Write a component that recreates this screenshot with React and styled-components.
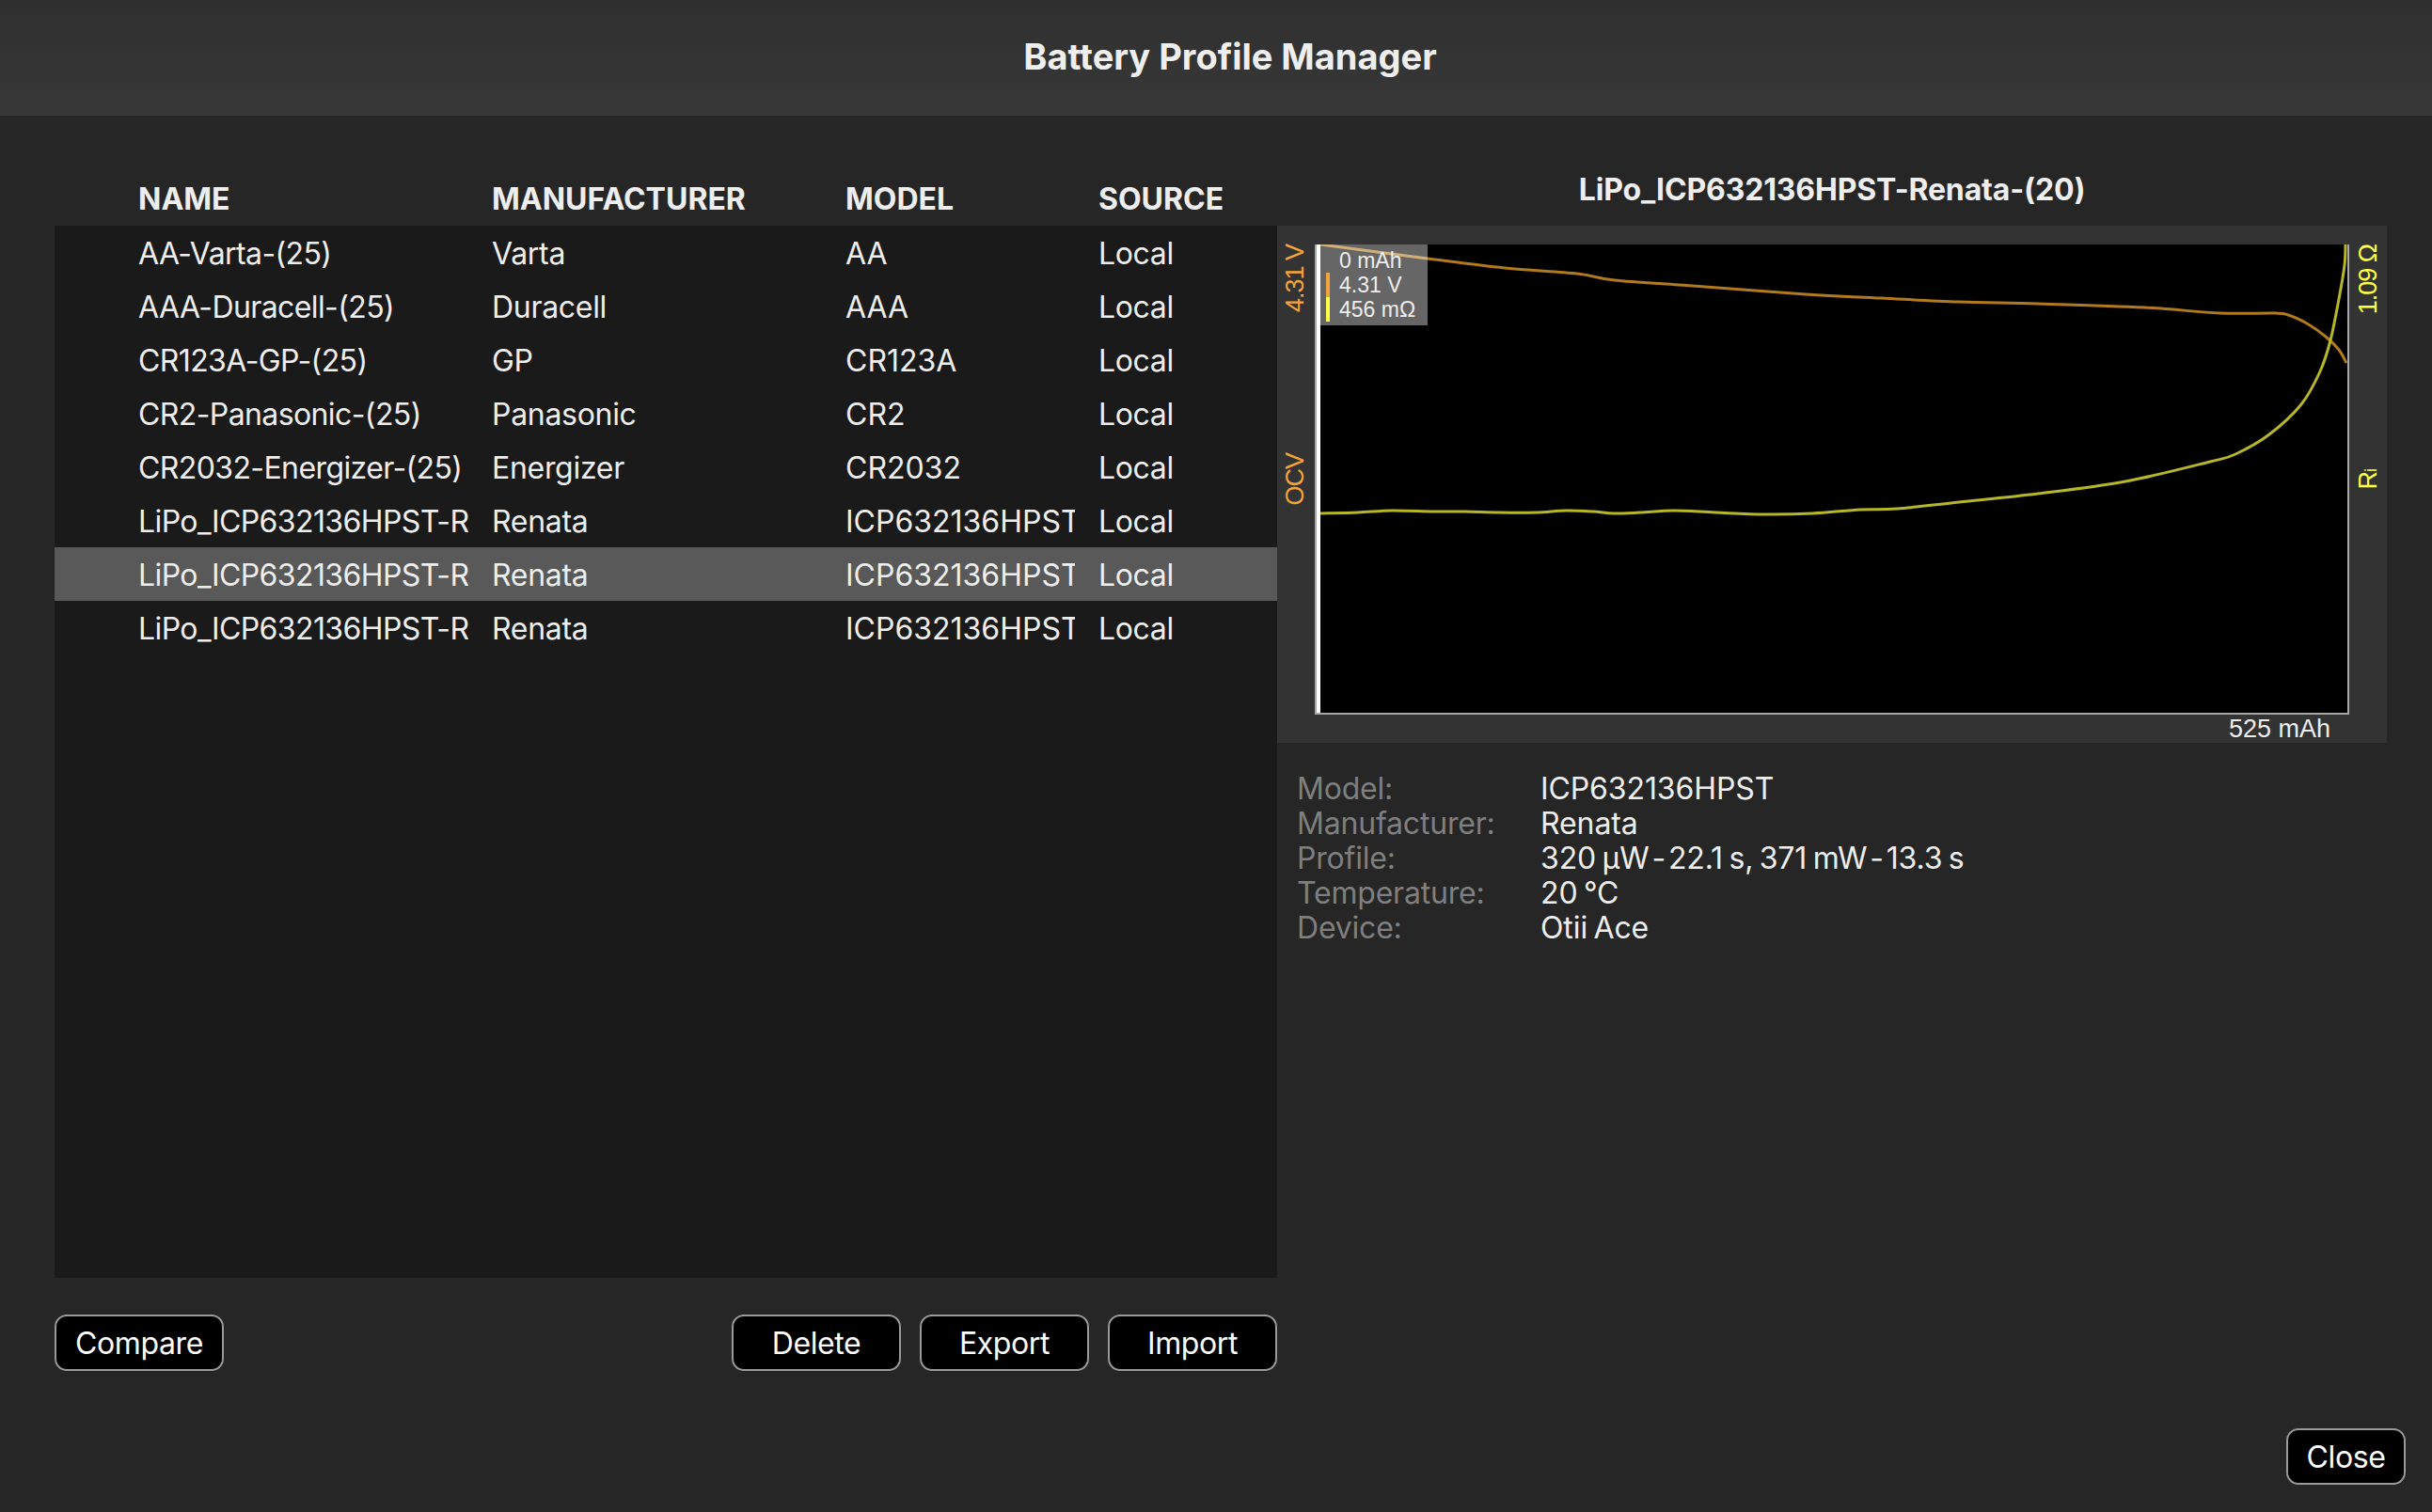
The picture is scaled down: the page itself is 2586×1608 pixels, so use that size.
import React from "react"
import styled, { createGlobalStyle } from "styled-components"

const PROFILES = [
    { name: "AA-Varta-(25)", manufacturer: "Varta", model: "AA" },
    { name: "AAA-Duracell-(25)", manufacturer: "Duracell", model: "AAA" },
    { name: "CR123A-GP-(25)", manufacturer: "GP", model: "CR123A" },
    { name: "CR2-Panasonic-(25)", manufacturer: "Panasonic", model: "CR2" },
    { name: "CR2032-Energizer-(25)", manufacturer: "Energizer", model: "CR2032" },
    { name: "LiPo_ICP632136HPST-Renata-(10)", manufacturer: "Renata", model: "ICP632136HPST" },
    { name: "LiPo_ICP632136HPST-Renata-(20)", manufacturer: "Renata", model: "ICP632136HPST", selected: true },
    { name: "LiPo_ICP632136HPST-Renata-(30)", manufacturer: "Renata", model: "ICP632136HPST" },
]

const DETAILS = [
    ["Model:", "ICP632136HPST"],
    ["Manufacturer:", "Renata"],
    ["Profile:", "320 µW\u200A-\u200A22.1 s, 371 mW\u200A-\u200A13.3 s"],
    ["Temperature:", "20 °C"],
    ["Device:", "Otii Ace"],
]

// curve points, in plot pixels
const VOLTAGE = [
    [0, 0], [114, 15], [196, 25], [273, 31], [313, 38], [396, 44], [516, 53], [596, 57], [679, 61],
    [763, 63], [876, 67], [956, 73], [1013, 73], [1029, 75], [1049, 84], [1069, 98], [1083, 112], [1091, 126],
]
const RESISTANCE = [
    [0, 286], [40, 285], [76, 283], [120, 284], [153, 284], [190, 285], [229, 285], [261, 283], [290, 284],
    [312, 286], [340, 285], [376, 283], [420, 285], [472, 287], [523, 286], [574, 282], [613, 281], [679, 274],
    [763, 265], [856, 252], [946, 231], [973, 223], [1009, 202], [1043, 170], [1063, 135], [1074, 102],
    [1083, 58], [1089, 22], [1090, 0],
]

const smoothPath = points => {
    let d = `M${points[0][0]} ${points[0][1]}`
    for (let i = 0; i < points.length - 1; i++) {
        const p0 = points[i - 1] || points[i]
        const p1 = points[i]
        const p2 = points[i + 1]
        const p3 = points[i + 2] || p2
        const c1x = p1[0] + (p2[0] - p0[0]) / 6
        const c1y = p1[1] + (p2[1] - p0[1]) / 6
        const c2x = p2[0] - (p3[0] - p1[0]) / 6
        const c2y = p2[1] - (p3[1] - p1[1]) / 6
        d += ` C${c1x} ${c1y} ${c2x} ${c2y} ${p2[0]} ${p2[1]}`
    }
    return d
}

export default function App() {
    return (
        <Page>
            <GlobalStyle />
            <TitleBar>Battery Profile Manager</TitleBar>
            <Main>
                <ListPanel>
                    <HeadRow>
                        <HeadCell>NAME</HeadCell>
                        <HeadCell>MANUFACTURER</HeadCell>
                        <HeadCell>MODEL</HeadCell>
                        <HeadCell>SOURCE</HeadCell>
                    </HeadRow>
                    <List>
                        {PROFILES.map(profile => (
                            <Row key={profile.name} $selected={profile.selected}>
                                <Cell $tracking="-0.6px">{profile.name}</Cell>
                                <Cell $tracking="-0.3px">{profile.manufacturer}</Cell>
                                <Cell>{profile.model}</Cell>
                                <Cell $tracking="-0.35px">Local</Cell>
                            </Row>
                        ))}
                    </List>
                    <Actions>
                        <Button>Compare</Button>
                        <ActionGroup>
                            <Button>Delete</Button>
                            <Button>Export</Button>
                            <Button>Import</Button>
                        </ActionGroup>
                    </Actions>
                </ListPanel>
                <DetailPanel>
                    <ChartTitle>LiPo_ICP632136HPST-Renata-(20)</ChartTitle>
                    <Chart>
                        <LeftAxis>
                            <AxisLabel $color="#f2a33a">4.31 V</AxisLabel>
                            <AxisLabel $color="#f2a33a">OCV</AxisLabel>
                        </LeftAxis>
                        <Plot>
                            <Canvas>
                                <svg width="1092" height="498" viewBox="0 0 1092 498">
                                    <path d={smoothPath(VOLTAGE)} fill="none" stroke="#b27a20" strokeWidth="3" />
                                    <path d={smoothPath(RESISTANCE)} fill="none" stroke="#b6b628" strokeWidth="3" />
                                </svg>
                                <Cursor>
                                    <CursorLine>0 mAh</CursorLine>
                                    <CursorLine $marker="#f2a33a">4.31 V</CursorLine>
                                    <CursorLine $marker="#ffff44">456 mΩ</CursorLine>
                                </Cursor>
                            </Canvas>
                        </Plot>
                        <RightAxis>
                            <AxisLabel $color="#ffff44">1.09 Ω</AxisLabel>
                            <AxisLabel $color="#ffff44">R<Sub>i</Sub></AxisLabel>
                        </RightAxis>
                        <BottomAxis>525 mAh</BottomAxis>
                    </Chart>
                    <Details>
                        {DETAILS.map(([label, value]) => (
                            <React.Fragment key={label}>
                                <DetailLabel>{label}</DetailLabel>
                                <DetailValue>{value}</DetailValue>
                            </React.Fragment>
                        ))}
                    </Details>
                </DetailPanel>
            </Main>
            <Footer>
                <Button $small>Close</Button>
            </Footer>
        </Page>
    )
}

const GlobalStyle = createGlobalStyle`
    html, body {
        margin: 0;
        padding: 0;
        background: #262626;
    }
    * {
        box-sizing: border-box;
    }
`

const Page = styled.div`
    width: 2586px;
    height: 1608px;
    display: flex;
    flex-direction: column;
    overflow: hidden;
    background: #262626;
    color: #eeeeee;
    font-family: Inter, "Noto Sans", sans-serif;
    font-size: 32px;
`

const TitleBar = styled.header`
    height: 123px;
    padding: 0 0 3px 30px;
    display: flex;
    align-items: center;
    justify-content: center;
    background: linear-gradient(#2f2f2f, #383838);
    font-size: 38px;
    font-weight: 700;
`

const Main = styled.main`
    flex: 1;
    display: flex;
    min-height: 0;
`

const ListPanel = styled.section`
    width: 1358px;
    padding-left: 58px;
    display: flex;
    flex-direction: column;
`

const columns = `
    display: grid;
    grid-template-columns: 351px 351px 244px 165px;
    column-gap: 25px;
    padding-left: 89px;
`

const HeadRow = styled.div`
    ${columns}
    height: 117px;
    padding-top: 69px;
`

const HeadCell = styled.div`
    line-height: 40px;
    font-weight: 700;
`

const List = styled.div`
    height: 1119px;
    background: #1a1a1a;
`

const Row = styled.div`
    ${columns}
    height: 57px;
    padding-top: 1px;
    align-items: center;
    background: ${({ $selected }) => ($selected ? "#595959" : "transparent")};
`

const Cell = styled.div`
    overflow: hidden;
    white-space: nowrap;
    letter-spacing: ${({ $tracking }) => $tracking || "0"};
`

const Actions = styled.div`
    margin-top: 39px;
    display: flex;
    justify-content: space-between;
`

const ActionGroup = styled.div`
    display: flex;
    gap: 20px;
`

const Button = styled.button`
    width: ${({ $small }) => ($small ? "127px" : "180px")};
    height: 60px;
    padding: 0;
    border: 2px solid #999999;
    border-radius: 13px;
    background: #000000;
    color: #ffffff;
    font-family: inherit;
    font-size: 32px;
    letter-spacing: -0.4px;
`

const DetailPanel = styled.section`
    width: 1180px;
    display: flex;
    flex-direction: column;
`

const ChartTitle = styled.h2`
    height: 117px;
    margin: 0;
    padding-top: 59px;
    line-height: 40px;
    text-align: center;
    font-size: 32px;
    font-weight: 700;
    letter-spacing: -0.15px;
`

const Chart = styled.div`
    display: grid;
    grid-template-columns: 40px 1100px 40px;
    grid-template-rows: 20px 500px 30px;
    background: #333333;
    font-family: "Liberation Sans", Arial, sans-serif;
    font-size: 27px;
`

const LeftAxis = styled.div`
    grid-column: 1;
    grid-row: 2;
    padding-right: 2px;
    display: grid;
    grid-template-rows: 1fr auto 1fr;
    justify-items: center;
    align-items: start;
`

const RightAxis = styled(LeftAxis)`
    grid-column: 3;
    padding-right: 0;
`

const AxisLabel = styled.span`
    writing-mode: vertical-rl;
    transform: rotate(180deg);
    line-height: 30px;
    white-space: nowrap;
    letter-spacing: -1px;
    color: ${({ $color }) => $color};
`

const Sub = styled.sub`
    font-size: 18px;
    vertical-align: -3px;
    line-height: 0;
`

const Plot = styled.div`
    grid-column: 2;
    grid-row: 2;
    border: 2px solid #a6a6a6;
    border-top: 0;
    background: #000000;
`

const Canvas = styled.div`
    position: relative;
    height: 498px;
    border-left: 4px solid #ffffff;

    svg {
        display: block;
    }
`

const Cursor = styled.div`
    position: absolute;
    top: 0;
    left: 0;
    width: 114px;
    height: 86px;
    padding: 4px 0 0 20px;
    background: rgba(255, 255, 255, 0.4);
    color: #eeeeee;
    font-size: 23px;
`

const CursorLine = styled.div`
    position: relative;
    height: 26px;
    line-height: 26px;
    white-space: nowrap;

    &::before {
        content: "";
        display: ${({ $marker }) => ($marker ? "block" : "none")};
        position: absolute;
        left: -14px;
        top: 0;
        width: 4px;
        height: 26px;
        background: ${({ $marker }) => $marker};
    }
`

const BottomAxis = styled.div`
    grid-column: 2;
    grid-row: 3;
    padding-right: 20px;
    line-height: 30px;
    text-align: right;
    color: #eeeeee;
`

const Details = styled.dl`
    margin: 30px 0 0;
    padding-left: 21px;
    display: grid;
    grid-template-columns: 259px 1fr;
    grid-auto-rows: 37px;
    line-height: 37px;
`

const DetailLabel = styled.dt`
    color: #7f7f7f;
    letter-spacing: -0.2px;
`

const DetailValue = styled.dd`
    margin: 0;
    letter-spacing: -0.1px;
    word-spacing: -2.5px;
`

const Footer = styled.footer`
    display: flex;
    justify-content: flex-end;
    padding: 0 28px 29px 0;
`
